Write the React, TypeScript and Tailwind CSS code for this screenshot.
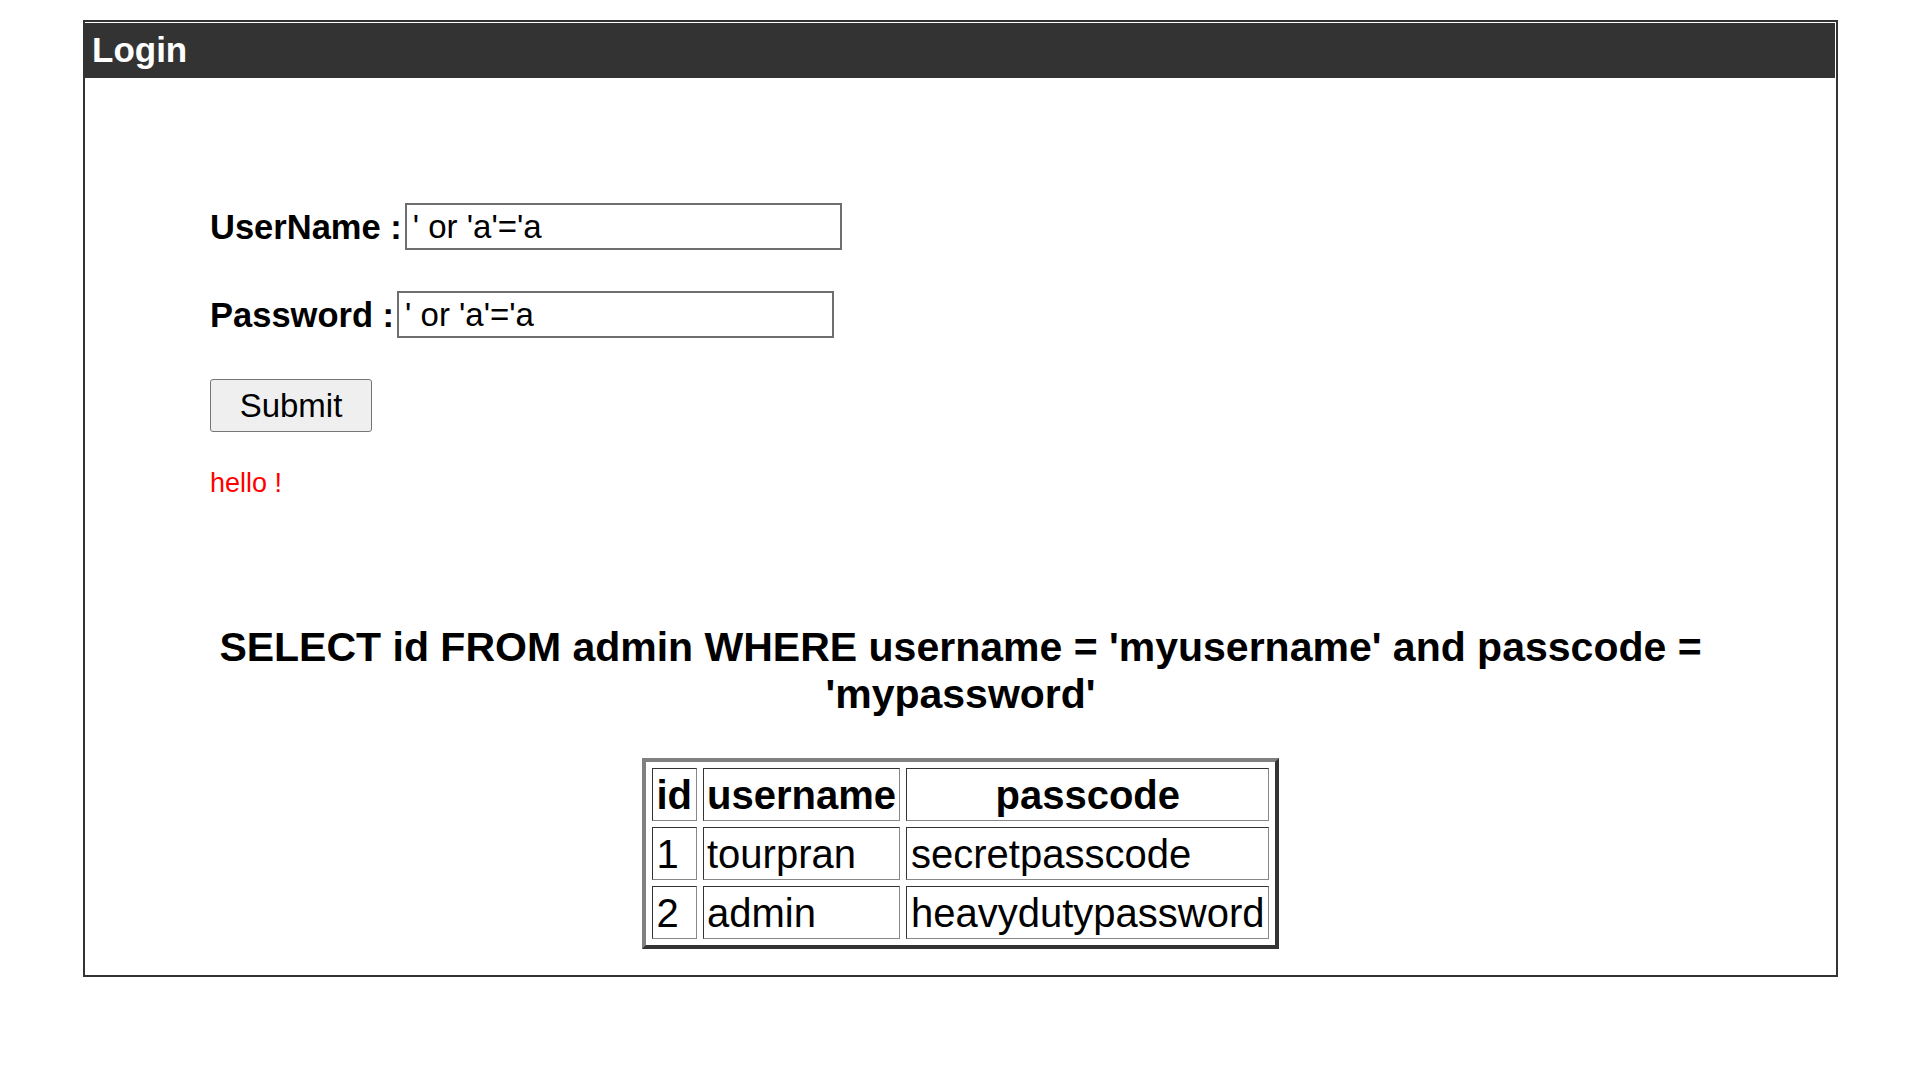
const rows = [
  { id: "1", username: "tourpran", passcode: "secretpasscode" },
  { id: "2", username: "admin", passcode: "heavydutypassword" },
];

const cell =
  "border border-t-[#333] border-l-[#333] border-r-[#888] border-b-[#888] px-[3.5px] py-[2.5px] leading-[46px]";

export default function App() {
  return (
    <div className="min-h-screen bg-white pt-[20px] font-['Liberation_Sans',Arial,sans-serif] text-black">
      <div className="ml-[83px] w-[1755px] border-2 border-[#333] pb-[26px]">
        <div className="mt-px mr-px flex h-[55px] items-center bg-[#333] pl-[7px]">
          <h1 className="text-[35px] font-bold text-white">Login</h1>
        </div>

        <form className="pl-[125px]" onSubmit={(e) => e.preventDefault()}>
          <div className="mt-[125px] flex items-center">
            <label className="text-[34.5px] font-bold leading-[40px]">UserName :</label>
            <input
              readOnly
              defaultValue="' or 'a'='a"
              className="ml-[3px] h-[47px] w-[437px] border-2 border-[#6e6e6e] px-[6px] text-[33px] outline-none"
            />
          </div>
          <div className="mt-[41px] flex items-center">
            <label className="text-[34.5px] font-bold leading-[40px]">Password :</label>
            <input
              readOnly
              defaultValue="' or 'a'='a"
              className="ml-[3px] h-[47px] w-[437px] border-2 border-[#6e6e6e] px-[6px] text-[33px] outline-none"
            />
          </div>
          <button
            type="submit"
            className="mt-[41px] h-[53px] w-[162px] rounded-[3px] border border-[#767676] bg-[#efefef] text-[33px]"
          >
            Submit
          </button>
          <p className="mt-[36px] text-[27px] leading-[31px] text-[#ff0000]">hello !</p>
        </form>

        <h2 className="mt-[125px] text-center text-[41px] font-bold leading-[47px]">
          SELECT id FROM admin WHERE username = 'myusername' and passcode =
          <br />
          'mypassword'
        </h2>

        <div className="mt-[40px] flex justify-center">
          <table className="border-separate border-spacing-[6px] border-4 border-t-[#808080] border-l-[#808080] border-r-[#333] border-b-[#333] text-[40px]">
            <thead>
              <tr>
                <th className={cell}>id</th>
                <th className={cell}>username</th>
                <th className={cell}>passcode</th>
              </tr>
            </thead>
            <tbody>
              {rows.map((r) => (
                <tr key={r.id}>
                  <td className={cell}>{r.id}</td>
                  <td className={cell}>{r.username}</td>
                  <td className={cell}>{r.passcode}</td>
                </tr>
              ))}
            </tbody>
          </table>
        </div>
      </div>
    </div>
  );
}
